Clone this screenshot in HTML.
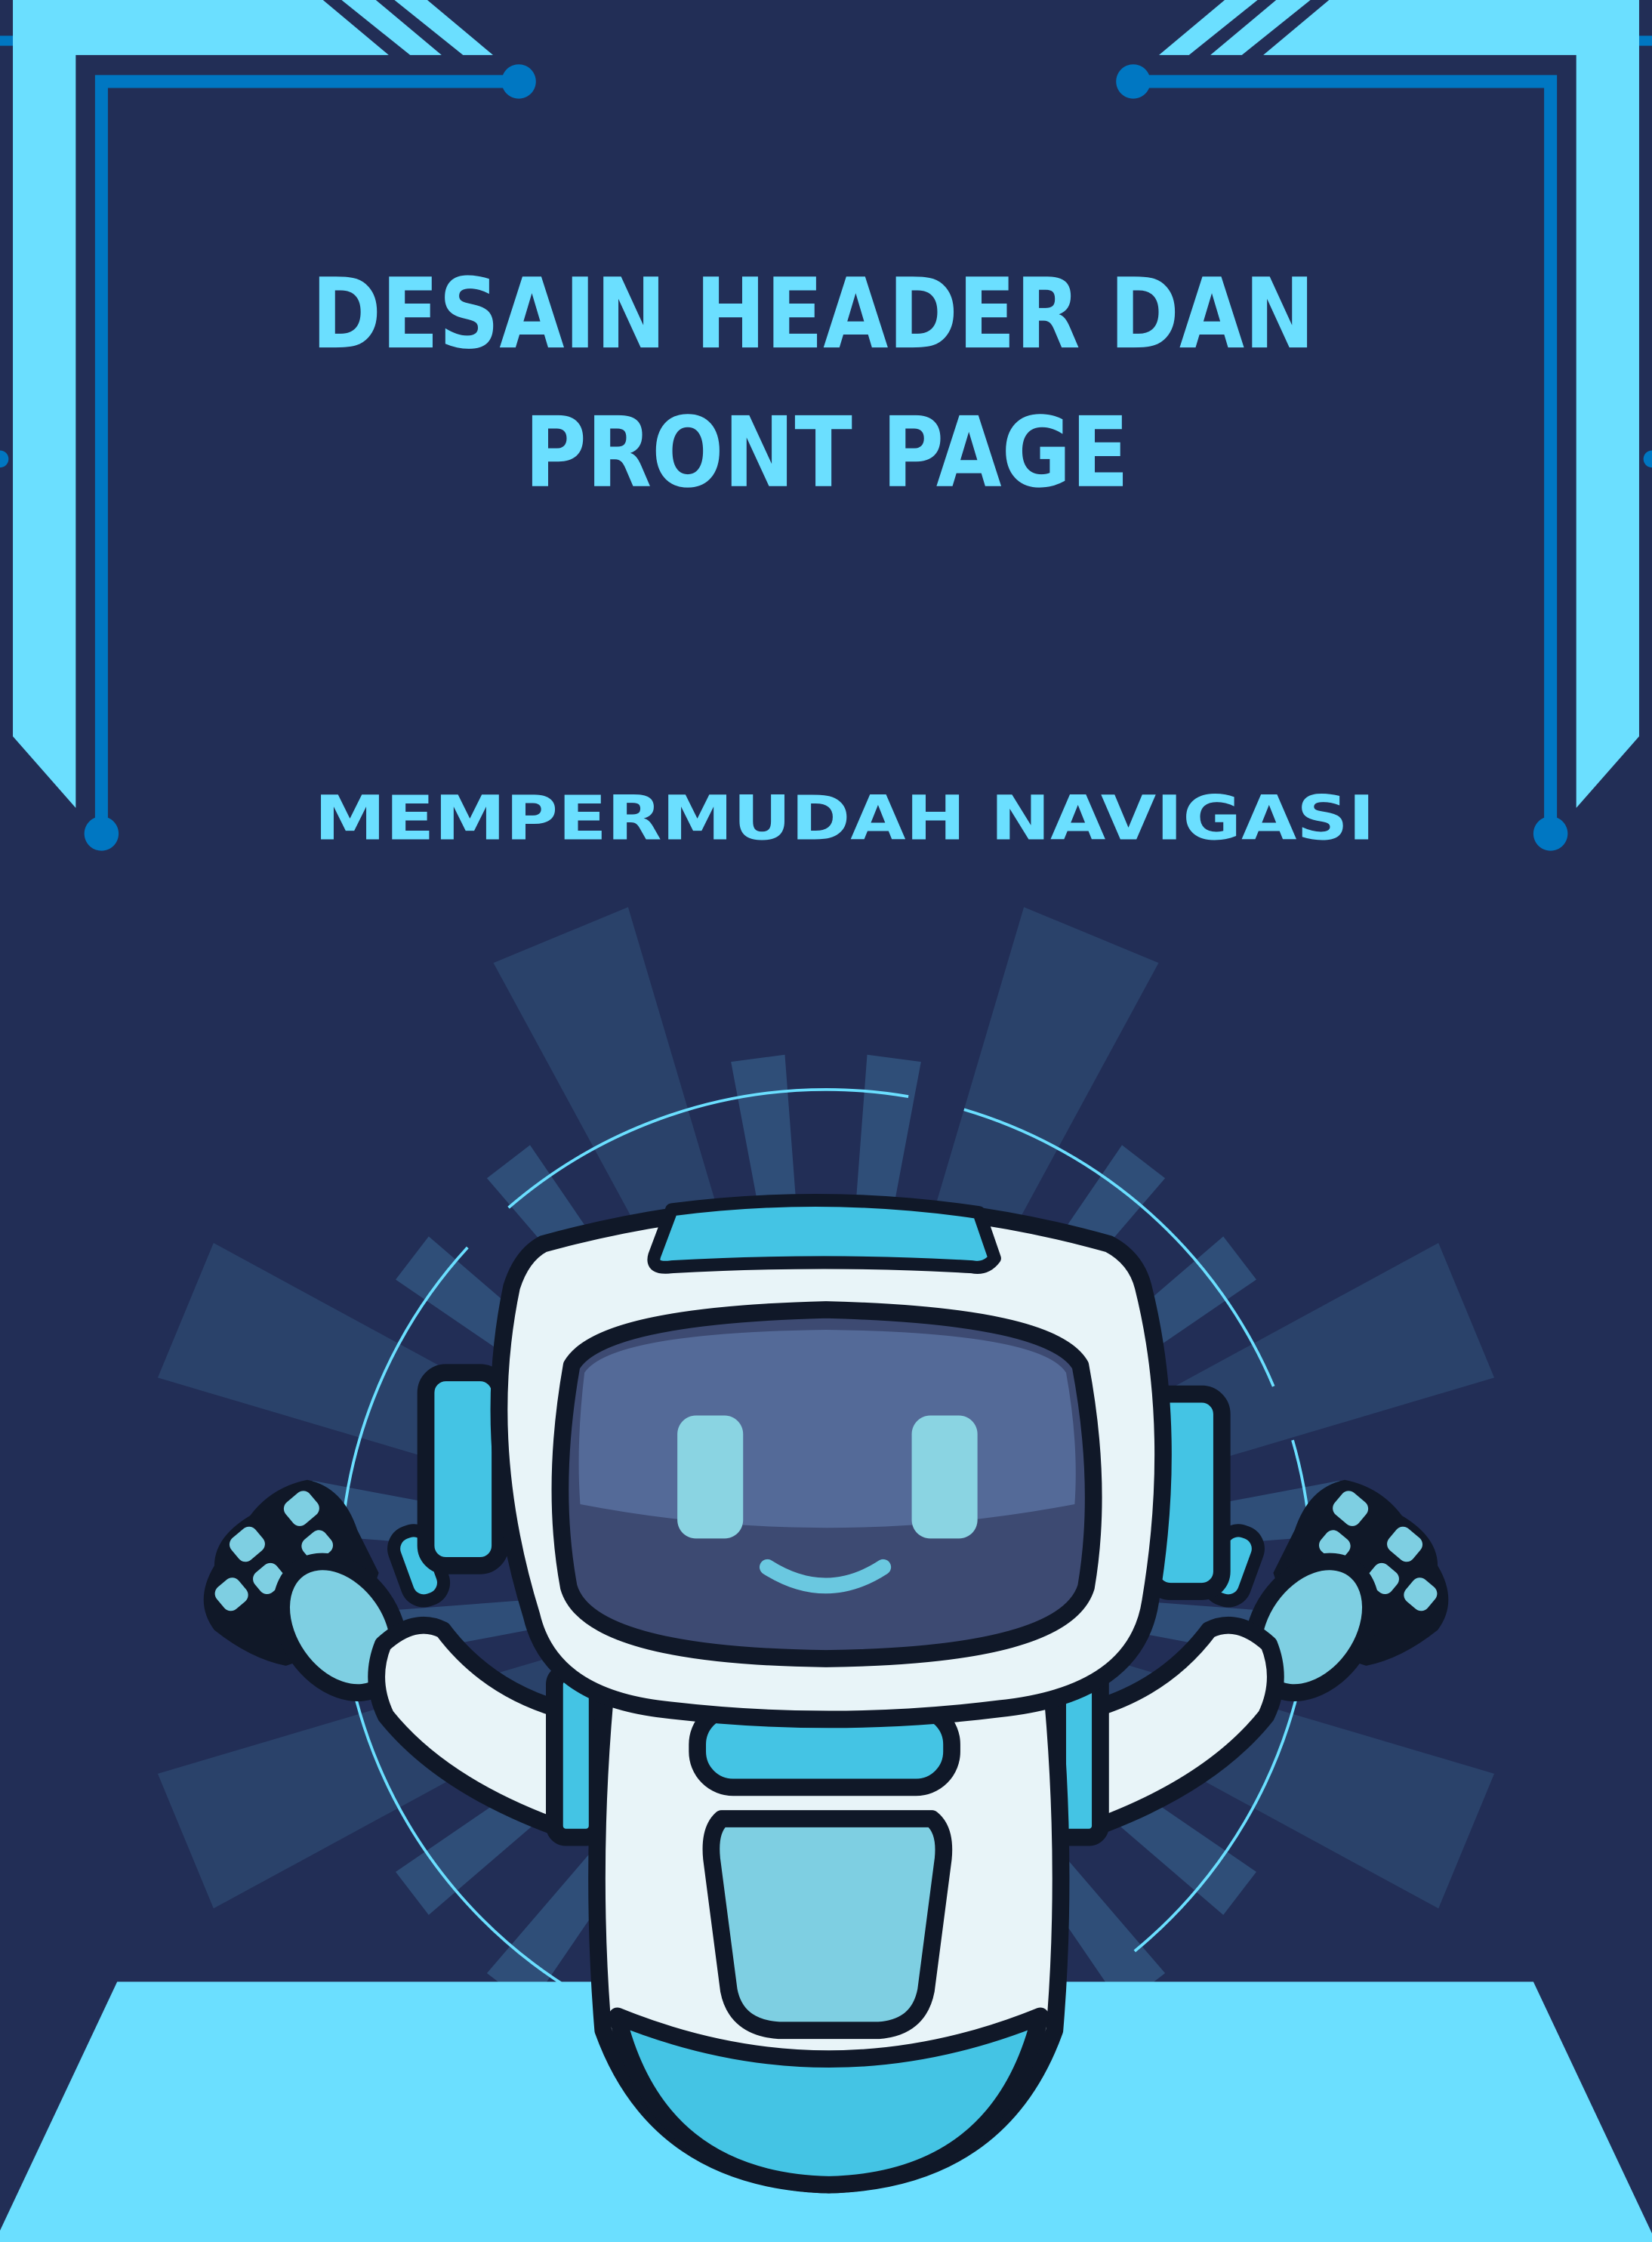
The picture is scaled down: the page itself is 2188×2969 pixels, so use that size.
<!DOCTYPE html>
<html><head><meta charset="utf-8"><style>
html,body{margin:0;padding:0;background:#222e56;}
svg{display:block;width:2188px;height:2969px;}
</style></head><body>
<svg viewBox="0 0 1156 1568" preserveAspectRatio="none" xmlns="http://www.w3.org/2000/svg">
<rect width="1156" height="1568" fill="#222e56"/>
<defs>
<g id="frame">
  <rect x="0" y="25" width="12" height="7" fill="#0077c2"/>
  <circle cx="0" cy="321" r="6" fill="#0077c2"/>
  <polygon points="9,0 226,0 272,38.5 53,38.5 53,565 9,515" fill="#6bdfff"/>
  <polygon points="239,0 263,0 309,38.5 287,38.5" fill="#6bdfff"/>
  <polygon points="276,0 299,0 345,38.5 324,38.5" fill="#6bdfff"/>
  <polyline points="71,583 71,57 363,57" fill="none" stroke="#0077c2" stroke-width="9"/>
  <circle cx="363" cy="57" r="12" fill="#0077c2"/>
  <circle cx="71" cy="583" r="12" fill="#0077c2"/>
</g>
<polygon id="big" points="527,617 629,617 599,902 557,902" fill="#2e4a72" opacity="0.75"/>
<polygon id="med" points="559,737 597,737 588,900 568,900" fill="#3a6a96" opacity="0.55"/>
<g id="hand">
  <path d="M150,1095 Q150,1075 175,1060 Q190,1040 215,1035 Q240,1040 250,1070 L265,1100 Q250,1150 200,1165 Q175,1160 150,1140 Q135,1120 150,1095 Z" fill="#101828"/>
  <g fill="#7ecfe2">
    <rect x="162" y="1070" width="22" height="20" rx="6" transform="rotate(-40 173 1080)"/>
    <rect x="200" y="1045" width="22" height="20" rx="6" transform="rotate(-40 211 1055)"/>
    <rect x="152" y="1105" width="20" height="20" rx="6" transform="rotate(-40 162 1115)"/>
    <rect x="178" y="1095" width="20" height="18" rx="6" transform="rotate(-40 188 1104)"/>
    <rect x="212" y="1072" width="20" height="18" rx="6" transform="rotate(-40 222 1081)"/>
  </g>
  <ellipse cx="238" cy="1138" rx="36" ry="50" transform="rotate(-35 238 1138)" fill="#7ecfe2" stroke="#101828" stroke-width="12"/>
  <rect x="280" y="1070" width="26" height="50" rx="12" transform="rotate(-20 293 1095)" fill="#44c4e4" stroke="#101828" stroke-width="9"/>
</g>
</defs>
<use href="#frame"/>
<use href="#frame" transform="translate(1156,0) scale(-1,1)"/>

<g fill="#6bdfff" font-family="'DejaVu Sans','Liberation Sans',sans-serif" font-weight="bold">
<text x="218" y="243" font-size="68" textLength="702" lengthAdjust="spacingAndGlyphs">DESAIN HEADER DAN</text>
<text x="367" y="340" font-size="68" textLength="423" lengthAdjust="spacingAndGlyphs">PRONT PAGE</text>
<text x="220" y="587" font-size="43" textLength="742" lengthAdjust="spacingAndGlyphs">MEMPERMUDAH NAVIGASI</text>
</g>

<g>
<use href="#big" transform="rotate(-22.5 578 1102)"/>
<use href="#big" transform="rotate(22.5 578 1102)"/>
<use href="#big" transform="rotate(-67.5 578 1102)"/>
<use href="#big" transform="rotate(67.5 578 1102)"/>
<use href="#big" transform="rotate(-112.5 578 1102)"/>
<use href="#big" transform="rotate(112.5 578 1102)"/>
<use href="#med" transform="rotate(-7.5 578 1102)"/>
<use href="#med" transform="rotate(7.5 578 1102)"/>
<use href="#med" transform="rotate(-37.5 578 1102)"/>
<use href="#med" transform="rotate(37.5 578 1102)"/>
<use href="#med" transform="rotate(-52.5 578 1102)"/>
<use href="#med" transform="rotate(52.5 578 1102)"/>
<use href="#med" transform="rotate(-82.5 578 1102)"/>
<use href="#med" transform="rotate(82.5 578 1102)"/>
<use href="#med" transform="rotate(-97.5 578 1102)"/>
<use href="#med" transform="rotate(97.5 578 1102)"/>
<use href="#med" transform="rotate(-127.5 578 1102)"/>
<use href="#med" transform="rotate(127.5 578 1102)"/>
<use href="#med" transform="rotate(-142.5 578 1102)"/>
<use href="#med" transform="rotate(142.5 578 1102)"/>
</g>
<circle cx="578" cy="1102" r="340" fill="none" stroke="#6bdfff" stroke-width="2" stroke-dasharray="300 40"/>

<polygon points="82,1386 1073,1386 1156,1562 1156,1568 0,1568 0,1560" fill="#6bdfff"/>

<use href="#hand"/>
<use href="#hand" transform="translate(1156,0) scale(-1,1)"/>
<g stroke="#101828" stroke-width="12" stroke-linejoin="round">
  <path d="M268,1150 Q290,1130 310,1140 Q340,1180 390,1195 L395,1280 Q310,1250 270,1200 Q258,1175 268,1150 Z" fill="#e8f4f8"/>
  <path d="M888,1150 Q866,1130 846,1140 Q816,1180 766,1195 L761,1280 Q846,1250 886,1200 Q898,1175 888,1150 Z" fill="#e8f4f8"/>
  <rect x="298" y="960" width="52" height="135" rx="14" fill="#44c4e4"/>
  <rect x="805" y="975" width="50" height="138" rx="14" fill="#44c4e4"/>
  <rect x="388" y="1170" width="30" height="115" rx="8" fill="#44c4e4"/>
  <rect x="740" y="1170" width="30" height="115" rx="8" fill="#44c4e4"/>
  <path d="M425,1170 L735,1170 Q748,1300 738,1420 Q700,1525 580,1528 Q460,1525 422,1420 Q412,1300 425,1170 Z" fill="#e8f4f8"/>
  <path d="M432,1410 Q580,1470 728,1410 Q700,1525 580,1528 Q460,1525 432,1410 Z" fill="#44c4e4"/>
  <rect x="488" y="1195" width="178" height="55" rx="25" fill="#44c4e4"/>
  <path d="M505,1272 L652,1272 Q662,1280 660,1300 L648,1392 Q643,1418 615,1420 L545,1420 Q515,1418 510,1392 L498,1300 Q496,1280 505,1272 Z" fill="#7ecfe2"/>
  <path d="M380,870 Q580,815 776,870 Q795,880 800,900 Q825,1000 805,1120 Q795,1185 700,1195 Q580,1210 460,1195 Q385,1185 372,1130 Q335,1010 358,900 Q365,878 380,870 Z" fill="#e8f4f8"/>
  <path d="M470,846 Q578,832 685,848 L696,880 Q690,888 680,886 Q578,880 470,886 Q455,888 458,878 Z" fill="#44c4e4" stroke-width="9"/>
  <path d="M400,955 Q420,920 578,916 Q736,920 756,955 Q772,1040 760,1110 Q745,1158 578,1160 Q412,1158 398,1110 Q385,1040 400,955 Z" fill="#3d4a72"/>
</g>
<path d="M409,960 Q428,932 578,930 Q728,932 746,960 Q755,1010 752,1052 Q578,1085 406,1052 Q403,1010 409,960 Z" fill="#546a98"/>
<rect x="474" y="990" width="46" height="86" rx="13" fill="#8ad4e2"/>
<rect x="638" y="990" width="46" height="86" rx="13" fill="#8ad4e2"/>
<path d="M537,1096 Q578,1122 618,1096" fill="none" stroke="#6ac8e0" stroke-width="11" stroke-linecap="round"/>
</svg>
</body></html>
